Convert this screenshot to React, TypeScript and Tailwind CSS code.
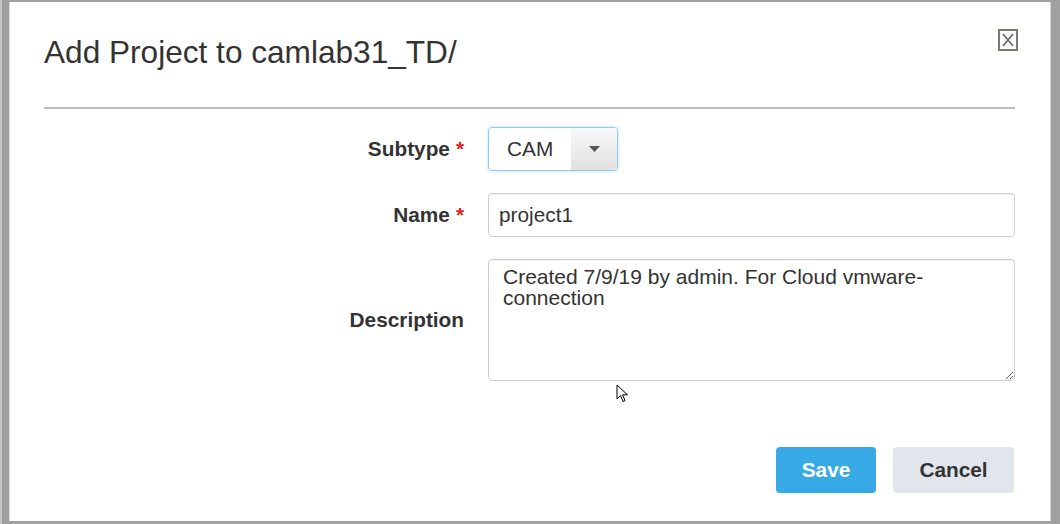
import React from "react";

const CloseBox = () => (
  <svg width="20" height="22" viewBox="0 0 20 22" className="block">
    <rect x="1" y="1" width="18" height="20" fill="white" stroke="#7a7a72" strokeWidth="2" />
    <path d="M5 5 L15 17 M15 5 L5 17" stroke="#6e6e68" strokeWidth="1.8" />
  </svg>
);

const Pointer = () => (
  <svg width="13" height="20" viewBox="0 0 13 20" className="absolute left-[614px] top-[384px]">
    <path d="M1 1 L1 15 L4.5 11.5 L7 17.5 L9 16.6 L6.6 10.8 L11.5 10.8 Z" fill="white" stroke="black" strokeWidth="1" strokeLinejoin="miter" />
  </svg>
);

const Label = ({ text, required }: { text: string; required?: boolean }) => (
  <div className="text-right text-[20.8px] font-bold text-[#333]">
    {text}
    {required && <span className="ml-[6px] text-[#e0201c]">*</span>}
  </div>
);

export default function App() {
  return (
    <div
      className="relative w-[1060px] h-[524px] bg-[#a0a0a0] border-l-2 border-[#c6c6c6] pl-[7px] pr-[9px] pt-[2px] pb-[3px] flex"
      style={{ fontFamily: '"Liberation Sans", Arial, sans-serif' }}
    >
      <div className="flex-1 bg-white border-x border-[#d8d8d8] flex flex-col pl-[34px] pr-[35px]">
        {/* header */}
        <div className="flex items-start justify-between pt-[27px]">
          <h1 className="mt-[5px] text-[31.6px] leading-[36px] text-[#333]">Add Project to camlab31_TD/</h1>
          <div className="mr-[-3px]">
            <CloseBox />
          </div>
        </div>
        <div className="mt-[37px] h-[2px] bg-[#bcbcbc]" />

        {/* form */}
        <div className="mt-[18px] grid grid-cols-[420px_1fr] gap-x-[24px] gap-y-[22px] items-center">
          <Label text="Subtype" required />
          <div className="flex">
            <div className="flex h-[44px] w-[130px] rounded-[4px] border border-[#8ecbef] shadow-[0_0_3px_rgba(102,175,233,0.5)] overflow-hidden">
              <div className="flex-1 flex items-center pl-[18px] text-[20.8px] text-[#333]">CAM</div>
              <div className="w-[46px] flex items-center justify-center bg-gradient-to-b from-[#f8f8f8] to-[#e2e2e2]">
                <svg width="11" height="6" viewBox="0 0 11 6">
                  <path d="M0 0 L11 0 L5.5 6 Z" fill="#555" />
                </svg>
              </div>
            </div>
          </div>

          <Label text="Name" required />
          <div className="h-[44px] rounded-[4px] border border-[#cfcfcf] shadow-[inset_0_1px_1px_rgba(0,0,0,0.06)] flex items-center pl-[10px] text-[20.8px] text-[#333]">
            project1
          </div>

          <Label text="Description" />
          <textarea
            readOnly
            defaultValue="Created 7/9/19 by admin. For Cloud vmware-connection"
            className="block w-full h-[122px] rounded-[4px] border border-[#cfcfcf] shadow-[inset_0_1px_1px_rgba(0,0,0,0.06)] pl-[14px] pr-[24px] pt-[7px] text-[21px] leading-[20.5px] text-[#333] outline-none"
            style={{ fontFamily: '"Liberation Sans", Arial, sans-serif' }}
          />
        </div>

        {/* buttons */}
        <div className="mt-[66px] flex justify-end gap-[17px] pr-[1px]">
          <button className="h-[46px] w-[100px] rounded-[4px] bg-[#38a9e7] text-white text-[20.8px] font-bold">Save</button>
          <button className="h-[46px] w-[121px] rounded-[4px] bg-[#e1e6ec] text-[#333] text-[20.8px] font-bold">Cancel</button>
        </div>
      </div>
      <Pointer />
    </div>
  );
}
